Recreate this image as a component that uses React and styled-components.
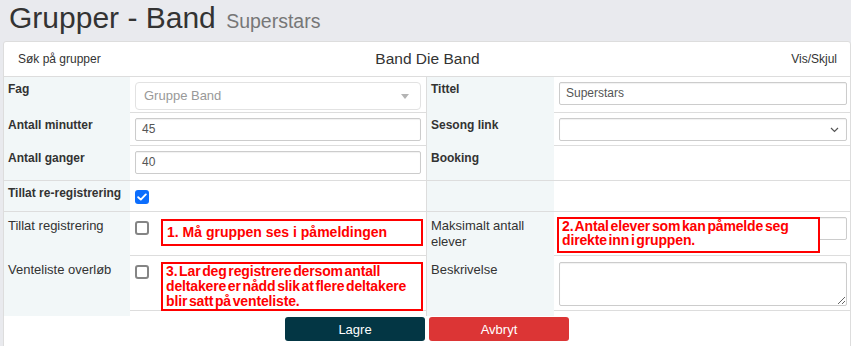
import React from "react";
import styled, { createGlobalStyle } from "styled-components";

const GlobalStyle = createGlobalStyle`
  html, body { margin: 0; padding: 0; background: #e9eaee; }
  body { font-family: "Liberation Sans", Arial, sans-serif; color: #333; }
  * { box-sizing: border-box; }
`;

const Page = styled.div`
  width: 851px;
  min-height: 346px;
  background: #e9eaee;
  overflow: hidden;
`;

const TitleBar = styled.div`
  height: 41px;
  padding: 0 9px;
`;

const Title = styled.h1`
  margin: 0;
  font-weight: 400;
  font-size: 30px;
  line-height: 36px;
  color: #333;
  white-space: nowrap;
`;

const SubTitle = styled.small`
  font-size: 19.5px;
  color: #777;
  margin-left: 2px;
`;

const Panel = styled.div`
  margin-left: 3px;
  background: #fff;
  border: 1px solid #ddd;
  border-radius: 3px 3px 0 0;
  min-height: 320px;
`;

const PanelHeader = styled.div`
  height: 35px;
  border-bottom: 1px solid #ddd;
  display: grid;
  grid-template-columns: 1fr auto 1fr;
  align-items: center;
  padding: 0 13px 0 14px;
`;

const HeaderLink = styled.span`
  font-size: 12px;
  color: #333;
  justify-self: ${(p) => (p.$right ? "end" : "start")};
`;

const HeaderTitle = styled.span`
  font-size: 15.5px;
  color: #333;
`;

const Row = styled.div`
  display: grid;
  grid-template-columns: 126px 296px 128px 296px;
  height: ${(p) => p.$h}px;
  border-bottom: 1px solid #ddd;
`;

const Label = styled.div`
  background: #f2f7f8;
  padding: ${(p) => (p.$bold ? "5px 4px" : "6px 4px")};
  font-size: ${(p) => (p.$bold ? "12px" : "13px")};
  font-weight: ${(p) => (p.$bold ? 700 : 400)};
  line-height: ${(p) => (p.$bold ? "15.6px" : "16px")};
  color: #333;
  ${(p) => (p.$divider ? "border-left: 1px solid #ddd;" : "")}
`;

const Value = styled.div`
  position: relative;
  padding: 5px ${(p) => (p.$last ? 3 : 5)}px 5px 5px;
  display: flex;
  align-items: flex-start;
`;

const TextInput = styled.div`
  width: 100%;
  height: 23px;
  border: 1px solid #ccc;
  border-radius: 2px;
  box-shadow: inset 0 1px 1px rgba(0, 0, 0, 0.06);
  padding: 0 6px;
  font-size: 12px;
  line-height: 21px;
  color: #555;
  background: #fff;
`;

const Select2 = styled.div`
  width: 100%;
  height: 28px;
  border: 1px solid #e2e2e2;
  border-radius: 4px;
  padding: 0 8px;
  font-size: 13px;
  line-height: 26px;
  color: #999;
  display: flex;
  justify-content: space-between;
  align-items: center;
  background: #fff;
`;

const Caret = styled.span`
  width: 0;
  height: 0;
  border-left: 4px solid transparent;
  border-right: 4px solid transparent;
  border-top: 5px solid #b4b4b4;
  margin-right: 3px;
`;

const NativeSelect = styled(TextInput)`
  display: flex;
  justify-content: flex-end;
  align-items: center;
  padding-right: 7px;
`;

const TextArea = styled.textarea`
  width: 100%;
  height: 44px;
  border: 1px solid #ccc;
  border-radius: 2px;
  box-shadow: inset 0 1px 1px rgba(0, 0, 0, 0.06);
  font-family: inherit;
  font-size: 12px;
  margin: 1px 0 0;
  padding: 4px 6px;
  resize: vertical;
`;

const Box = styled.span`
  flex: none;
  width: 14px;
  height: 14px;
  margin-top: 4px;
  border-radius: 3px;
  display: flex;
  align-items: center;
  justify-content: center;
  background: ${(p) => (p.$checked ? "#0d6efd" : "#fff")};
  border: ${(p) => (p.$checked ? "none" : "2px solid #858585")};
`;

const Note = styled.div`
  flex: none;
  width: ${(p) => p.$w}px;
  border: 2px solid #f00;
  background: #fff;
  color: #f00;
  font-weight: 700;
  font-size: 14px;
  padding: ${(p) => p.$pad || "0 3px"};
  line-height: ${(p) => p.$lh}px;
  word-spacing: ${(p) => (p.$tight ? "-2px" : "0")};
  letter-spacing: ${(p) => (p.$tight ? "-0.15px" : "0")};
  margin-left: ${(p) => p.$ml || 0}px;
  margin-top: ${(p) => p.$mt || 0}px;
  height: ${(p) => p.$h}px;
`;

const FloatingNote = styled(Note)`
  position: absolute;
  left: 3px;
  top: 5px;
`;

const Actions = styled.div`
  display: flex;
  justify-content: center;
  gap: 4px;
  padding-top: 6px;
`;

const Button = styled.button`
  width: 140px;
  height: 24px;
  border: none;
  border-radius: 3px;
  background: ${(p) => (p.$danger ? "#dc3535" : "#033644")};
  color: #fff;
  font-family: inherit;
  font-size: 13px;
  padding: 0;
`;

function Checkbox({ checked }) {
  return (
    <Box $checked={checked}>
      {checked && (
        <svg width="10" height="8" viewBox="0 0 10 8">
          <path d="M1.2 4.2 L3.8 6.6 L8.8 1.4" fill="none" stroke="#fff" strokeWidth="1.9" strokeLinecap="round" strokeLinejoin="round" />
        </svg>
      )}
    </Box>
  );
}

function Chevron() {
  return (
    <svg width="9" height="6" viewBox="0 0 9 6">
      <path d="M1 1 L4.5 4.5 L8 1" fill="none" stroke="#555" strokeWidth="1.2" />
    </svg>
  );
}

export default function App() {
  return (
    <Page>
      <GlobalStyle />
      <TitleBar>
        <Title>
          Grupper - Band <SubTitle>Superstars</SubTitle>
        </Title>
      </TitleBar>
      <Panel>
        <PanelHeader>
          <HeaderLink>Søk på grupper</HeaderLink>
          <HeaderTitle>Band Die Band</HeaderTitle>
          <HeaderLink $right>Vis/Skjul</HeaderLink>
        </PanelHeader>

        <Row $h={36}>
          <Label $bold>Fag</Label>
          <Value>
            <Select2>
              Gruppe Band
              <Caret />
            </Select2>
          </Value>
          <Label $bold $divider>Tittel</Label>
          <Value $last>
            <TextInput>Superstars</TextInput>
          </Value>
        </Row>

        <Row $h={33}>
          <Label $bold>Antall minutter</Label>
          <Value>
            <TextInput>45</TextInput>
          </Value>
          <Label $bold $divider>Sesong link</Label>
          <Value $last>
            <NativeSelect>
              <Chevron />
            </NativeSelect>
          </Value>
        </Row>

        <Row $h={35}>
          <Label $bold>Antall ganger</Label>
          <Value>
            <TextInput>40</TextInput>
          </Value>
          <Label $bold $divider>Booking</Label>
          <Value $last />
        </Row>

        <Row $h={31}>
          <Label $bold>Tillat re-registrering</Label>
          <Value>
            <Checkbox checked />
          </Value>
          <Label $divider />
          <Value $last />
        </Row>

        <Row $h={44}>
          <Label>Tillat registrering</Label>
          <Value>
            <Checkbox />
            <Note $w={262} $h={27} $lh={23} $ml={12} $mt={2} $pad="0 4px">
              1. Må gruppen ses i påmeldingen
            </Note>
          </Value>
          <Label $divider>Maksimalt antall elever</Label>
          <Value $last>
            <TextInput />
            <FloatingNote $w={263} $h={36} $lh={14} $tight>
              2. Antal elever som kan påmelde seg direkte inn i gruppen.
            </FloatingNote>
          </Value>
        </Row>

        <Row $h={55}>
          <Label>Venteliste overløb</Label>
          <Value>
            <Checkbox />
            <Note $w={262} $h={49} $lh={15} $ml={12} $mt={1} $tight>
              3. Lar deg registrere dersom antall deltakere er nådd slik at flere deltakere blir satt på venteliste.
            </Note>
          </Value>
          <Label $divider>Beskrivelse</Label>
          <Value $last>
            <TextArea />
          </Value>
        </Row>

        <Actions>
          <Button>Lagre</Button>
          <Button $danger>Avbryt</Button>
        </Actions>
      </Panel>
    </Page>
  );
}
